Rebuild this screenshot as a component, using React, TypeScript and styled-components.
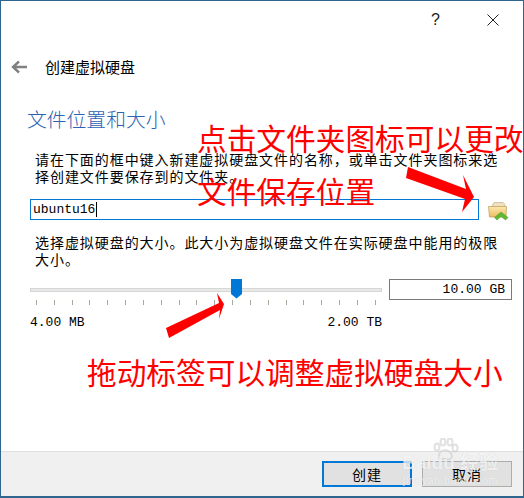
import { FC } from 'react';
import styled, { createGlobalStyle } from 'styled-components';

const GlobalStyle = createGlobalStyle`
  html, body {
    margin: 0;
    padding: 0;
    background: #fff;
  }
`;

const cjk = `"Noto Sans CJK SC", "Noto Sans", sans-serif`;
const mono = `"Liberation Mono", "Noto Sans CJK SC", monospace`;

const Window = styled.div`
  position: relative;
  box-sizing: border-box;
  width: 524px;
  height: 498px;
  display: flex;
  flex-direction: column;
  border: 1px solid #2f6690;
  border-bottom-width: 2px;
  background: #fff;
  font-family: ${cjk};
  color: #000;
  overflow: hidden;
`;
const TitleBar = styled.div`
  height: 37px;
  display: flex;
  justify-content: flex-end;
  align-items: center;
  gap: 47px;
  padding-right: 24px;
`;
const HelpMark = styled.span`
  font-family: "Liberation Sans", sans-serif;
  font-size: 16px;
  color: #222;
`;
const Header = styled.div`
  height: 22px;
  margin-top: 18px;
  display: flex;
  align-items: center;
  gap: 18px;
  padding-left: 10px;
`;
const Title = styled.div`
  font-size: 15px;
  line-height: 22px;
`;
const Content = styled.div`
  flex: 1;
  padding: 28px 11px 0 29px;
`;
const Heading = styled.h2`
  margin: 0 0 0 -3px;
  font-size: 19.8px;
  line-height: 26px;
  font-weight: 300;
  color: #2c62b4;
`;
const Para = styled.p<{ $top: number }>`
  margin: ${(p) => p.$top}px 0 0 5px;
  width: 468px;
  font-size: 14px;
  line-height: 17px;
  letter-spacing: 0.94px;
`;
const FileRow = styled.div`
  margin-top: 14px;
  display: flex;
  align-items: flex-start;
  gap: 9px;
`;
const FileInput = styled.div`
  box-sizing: border-box;
  width: 449px;
  height: 21px;
  border: 1px solid #0078d7;
  padding-left: 2px;
  font-family: ${mono};
  font-size: 13px;
  line-height: 19px;
  display: flex;
  align-items: center;
`;
const Caret = styled.span`
  display: inline-block;
  width: 1px;
  height: 15px;
  margin-left: 1px;
  background: #000;
`;
const Folder = styled.svg`
  margin-top: 3px;
  flex: none;
`;
const SliderRow = styled.div`
  margin-top: 11px;
  display: flex;
  gap: 7px;
`;
const SliderCol = styled.div`
  width: 352px;
`;
const Track = styled.div`
  position: relative;
  height: 21px;
  display: flex;
  align-items: center;
`;
const Groove = styled.div`
  width: 100%;
  height: 2px;
  background: #e7eae7;
  border: 1px solid #d6d6d6;
`;
const Thumb = styled.svg`
  position: absolute;
  left: 201px;
  top: 0;
`;
const Ticks = styled.div`
  display: flex;
  justify-content: space-between;
  padding: 0 6px;
  height: 5px;
`;
const Tick = styled.span`
  width: 1px;
  height: 5px;
  background: #a8a89c;
`;
const Scale = styled.div`
  margin-top: 10px;
  display: flex;
  justify-content: space-between;
  font-family: ${mono};
  font-size: 13px;
  line-height: 16px;
`;
const SizeBox = styled.div`
  box-sizing: border-box;
  width: 123px;
  height: 21px;
  border: 1px solid #7a7a7a;
  padding-right: 6px;
  text-align: right;
  font-family: ${mono};
  font-size: 13px;
  line-height: 19px;
`;
const Footer = styled.div`
  box-sizing: border-box;
  height: 45px;
  display: flex;
  justify-content: flex-end;
  gap: 10px;
  padding: 9px 11px 0 0;
  background: #f0f0f0;
  border-top: 1px solid #dfdfdf;
`;
const DialogButton = styled.div<{ $primary?: boolean }>`
  box-sizing: border-box;
  width: 90px;
  height: 26px;
  display: flex;
  align-items: center;
  justify-content: center;
  background: #e1e1e1;
  font-size: 14px;
  letter-spacing: 1px;
  border: ${(p) => (p.$primary ? '2px solid #0078d7' : '1px solid #adadad')};
`;
const Note = styled.div<{ $left: number; $top: number }>`
  position: absolute;
  left: ${(p) => p.$left}px;
  top: ${(p) => p.$top}px;
  font-size: 29.7px;
  font-weight: 400;
  line-height: 36px;
  white-space: nowrap;
  color: #ff0000;
`;
const ArrowLayer = styled.svg`
  position: absolute;
  left: -1px;
  top: -1px;
  pointer-events: none;
`;
const Watermark = styled.div`
  position: absolute;
  left: 398px;
  top: 437px;
  width: 110px;
  height: 56px;
  color: rgba(255, 255, 255, 0.72);
  font-family: "Liberation Sans", "Noto Sans CJK SC", sans-serif;
  text-shadow: 0 0 1px rgba(0, 0, 0, 0.12);
`;
const WatermarkLogo = styled.div`
  position: absolute;
  left: 3px;
  top: 14px;
  font-size: 19px;
  font-weight: 700;
  line-height: 22px;
  white-space: nowrap;
`;
const WatermarkUrl = styled.div`
  position: absolute;
  left: 4px;
  top: 36px;
  font-size: 10.5px;
  line-height: 13px;
  letter-spacing: 0.6px;
  white-space: nowrap;
`;
const Paw = styled.svg`
  position: absolute;
  left: 32px;
  top: 0;
  color: rgba(200, 200, 200, 0.55);
`;

const BackArrow: FC = () => (
  <svg width="16" height="14" viewBox="0 0 16 14">
    <path d="M16 7H3M8 1.500 2 7l6 5.500" fill="none" stroke="#808080" strokeWidth="2.400" />
  </svg>
);

const CloseIcon: FC = () => (
  <svg width="12" height="12" viewBox="0 0 12 12">
    <path d="M0.500 0.500 11.500 11.500M11.500 0.500 0.500 11.500" stroke="#222" strokeWidth="1" fill="none" />
  </svg>
);

const FolderIcon: FC = () => (
  <Folder width="21" height="19" viewBox="0 0 21 19">
    <defs>
      <linearGradient id="fold" x1="0" y1="0" x2="0" y2="1">
        <stop offset="0" stopColor="#fce8ae" />
        <stop offset="1" stopColor="#eebd62" />
      </linearGradient>
    </defs>
    <path d="M4 4 6 0.500h9l2 2V6H4z" fill="#efe0c0" stroke="#c6ae86" strokeWidth="0.700" />
    <path d="M0.500 4.500H18.500L18 15H1.500z" fill="url(#fold)" stroke="#c09a55" strokeWidth="0.700" />
    <path d="M6.500 15.500 13 10l7 5.500-2.500 2.500L13 14.500 9 18z" fill="#5fb733" stroke="#4a9a26" strokeWidth="0.500" />
  </Folder>
);

const App: FC = () => {
  const ticks = Array.from({ length: 20 }, (_, i) => i);
  return (
    <>
      <GlobalStyle />
      <Window>
        <TitleBar>
          <HelpMark>?</HelpMark>
          <CloseIcon />
        </TitleBar>
        <Header>
          <BackArrow />
          <Title>创建虚拟硬盘</Title>
        </Header>
        <Content>
          <Heading>文件位置和大小</Heading>
          <Para $top={19}>请在下面的框中键入新建虚拟硬盘文件的名称，或单击文件夹图标来选择创建文件要保存到的文件夹。</Para>
          <FileRow>
            <FileInput>
              ubuntu16
              <Caret />
            </FileInput>
            <FolderIcon />
          </FileRow>
          <Para $top={13}>选择虚拟硬盘的大小。此大小为虚拟硬盘文件在实际硬盘中能用的极限大小。</Para>
          <SliderRow>
            <SliderCol>
              <Track>
                <Groove />
                <Thumb width="11" height="20" viewBox="0 0 11 20">
                  <path d="M0 0H11V15L5.500 19.500 0 15z" fill="#0078d7" />
                </Thumb>
              </Track>
              <Ticks>
                {ticks.map((t) => (
                  <Tick key={t} />
                ))}
              </Ticks>
              <Scale>
                <span>4.00 MB</span>
                <span>2.00 TB</span>
              </Scale>
            </SliderCol>
            <SizeBox>10.00 GB</SizeBox>
          </SliderRow>
        </Content>
        <Footer>
          <DialogButton $primary>创建</DialogButton>
          <DialogButton>取消</DialogButton>
        </Footer>

        <Note $left={196} $top={119}>点击文件夹图标可以更改</Note>
        <Note $left={196} $top={172}>文件保存位置</Note>
        <Note $left={86} $top={353}>拖动标签可以调整虚拟硬盘大小</Note>
        <ArrowLayer width="524" height="498" viewBox="0 0 524 498">
          <polygon points="408,167 466,189 463,175 474,197 462,212 465,199 406,178" fill="#ff0000" />
          <polygon points="166,328 219,303 217,293 224,304 219,319 220,310 169,338" fill="#ff0000" />
        </ArrowLayer>
        <Watermark>
          <Paw width="28" height="24" viewBox="0 0 28 24">
            <g fill="none" stroke="currentColor" strokeWidth="2">
              <ellipse cx="6" cy="9" rx="2.500" ry="3.500" />
              <ellipse cx="12" cy="4" rx="2.500" ry="3.500" />
              <ellipse cx="19" cy="4" rx="2.500" ry="3.500" />
              <ellipse cx="24" cy="10" rx="2.500" ry="3.500" />
              <path d="M8 18c0-4 3-6 6-6s7 3 7 6-3 4-7 3-6 1-6-3z" />
            </g>
          </Paw>
          <WatermarkLogo>Baidu 经验</WatermarkLogo>
          <WatermarkUrl>jingyan.baidu.com</WatermarkUrl>
        </Watermark>
      </Window>
    </>
  );
};

export default App;
